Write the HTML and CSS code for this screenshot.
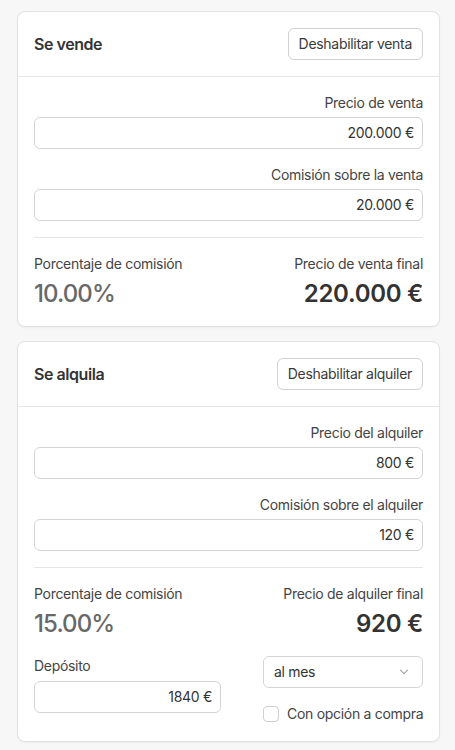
FILE: index.html
```html
<!DOCTYPE html>
<html lang="es">
<head>
<meta charset="utf-8">
<title>Precios</title>
<link rel="stylesheet" href="styles.css">
</head>
<body>
<main class="page">
  <section class="card">
    <header class="card-head">
      <h2 class="card-title">Se vende</h2>
      <button class="btn">Deshabilitar venta</button>
    </header>
    <div class="card-body">
      <label class="field">
        <span class="label">Precio de venta</span>
        <span class="input">200.000 €</span>
      </label>
      <label class="field">
        <span class="label">Comisión sobre la venta</span>
        <span class="input">20.000 €</span>
      </label>
      <hr class="divider">
      <div class="summary">
        <div class="stat">
          <span class="label">Porcentaje de comisión</span>
          <span class="pct">10.00%</span>
        </div>
        <div class="stat stat-right">
          <span class="label">Precio de venta final</span>
          <span class="total">220.000 €</span>
        </div>
      </div>
    </div>
  </section>

  <section class="card">
    <header class="card-head">
      <h2 class="card-title">Se alquila</h2>
      <button class="btn">Deshabilitar alquiler</button>
    </header>
    <div class="card-body">
      <label class="field">
        <span class="label">Precio del alquiler</span>
        <span class="input">800 €</span>
      </label>
      <label class="field">
        <span class="label">Comisión sobre el alquiler</span>
        <span class="input">120 €</span>
      </label>
      <hr class="divider">
      <div class="summary">
        <div class="stat">
          <span class="label">Porcentaje de comisión</span>
          <span class="pct">15.00%</span>
        </div>
        <div class="stat stat-right">
          <span class="label">Precio de alquiler final</span>
          <span class="total">920 €</span>
        </div>
      </div>
      <div class="extra">
        <div class="deposit">
          <span class="label label-left">Depósito</span>
          <span class="input">1840 €</span>
        </div>
        <div class="options">
          <div class="select">
            <span>al mes</span>
            <svg class="chev" width="10" height="6" viewBox="0 0 10 6"><path d="M1.5 1.2l3.5 3.5 3.5-3.5" fill="none" stroke="#a0a0a0" stroke-width="1.1" stroke-linecap="round" stroke-linejoin="round"/></svg>
          </div>
          <label class="check">
            <span class="box"></span>
            <span>Con opción a compra</span>
          </label>
        </div>
      </div>
    </div>
  </section>
</main>
</body>
</html>
```

FILE: styles.css
```css
* { box-sizing: border-box; }
html, body { margin: 0; padding: 0; }
body {
  background: #f7f7f7;
  font-family: Inter, "Noto Sans", "Liberation Sans", sans-serif;
  color: #3a3a3a;
  font-size: 14px;
  line-height: 20px;
  letter-spacing: -0.3px;
}
.page {
  padding: 11px 15px 10px 17px;
  display: flex;
  flex-direction: column;
  gap: 14px;
}
.card {
  background: #fff;
  border: 1px solid #e2e2e2;
  border-radius: 8px;
  box-shadow: 0 1px 2px rgba(0,0,0,0.04);
}
.card-head {
  display: flex;
  align-items: center;
  justify-content: space-between;
  padding: 16px;
  border-bottom: 1px solid #e6e6e6;
}
.card-title {
  margin: 0;
  font-size: 16px;
  font-weight: 600;
  color: #333;
  letter-spacing: -0.45px;
}
.btn {
  font: inherit;
  font-size: 14px;
  letter-spacing: -0.3px;
  color: #3a3a3a;
  background: #fff;
  border: 1px solid #d2d2d2;
  border-radius: 6px;
  height: 32px;
  padding: 0 10px;
}
.card-body {
  padding: 16px 16px 17px;
  display: flex;
  flex-direction: column;
}
.field {
  display: flex;
  flex-direction: column;
  align-items: flex-end;
  gap: 4px;
  margin-bottom: 16px;
}
.label { color: #444; font-size: 14px; }
.input {
  display: block;
  width: 100%;
  height: 32px;
  line-height: 30px;
  border: 1px solid #d4d4d4;
  border-radius: 6px;
  text-align: right;
  padding: 0 8px;
  color: #333;
}
.divider {
  border: 0;
  border-top: 1px solid #e6e6e6;
  margin: 0 0 16px;
}
.summary {
  display: flex;
  justify-content: space-between;
}
.stat { display: flex; flex-direction: column; gap: 5px; }
.stat-right { align-items: flex-end; }
.pct {
  font-size: 24px;
  line-height: 30px;
  font-weight: 500;
  color: #686868;
  letter-spacing: -0.9px;
}
.total {
  font-size: 24px;
  line-height: 30px;
  font-weight: 600;
  color: #333;
  letter-spacing: -0.3px;
}
.extra {
  display: grid;
  grid-template-columns: 187px 1fr;
  margin-top: 17px;
}
.deposit { display: flex; flex-direction: column; gap: 5px; }
.options {
  display: flex;
  flex-direction: column;
  align-items: flex-end;
  gap: 16px;
}
.select {
  width: 160px;
  height: 32px;
  border: 1px solid #d4d4d4;
  border-radius: 6px;
  display: flex;
  align-items: center;
  justify-content: space-between;
  padding: 0 13px 0 10px;
  color: #333;
}
.check {
  width: 160px;
  display: flex;
  align-items: center;
  gap: 8px;
  color: #444;
  white-space: nowrap;
}
.box {
  width: 16px;
  height: 16px;
  border: 1px solid #cfcfcf;
  border-radius: 4px;
  flex: none;
}
```
